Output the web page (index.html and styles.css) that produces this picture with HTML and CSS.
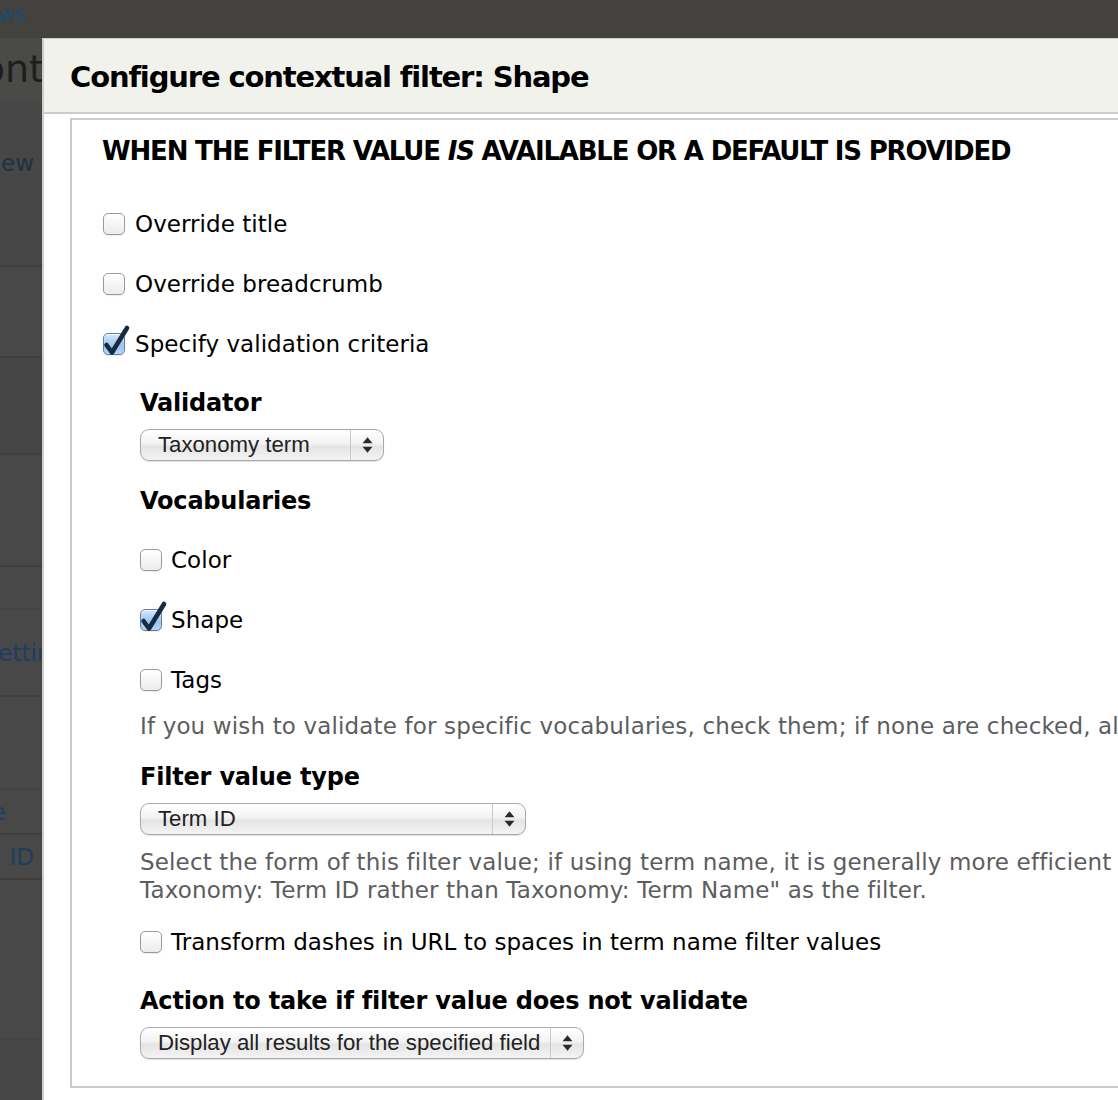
FILE: index.html
```html
<!DOCTYPE html>
<html>
<head>
<meta charset="utf-8">
<link rel="stylesheet" href="styles.css">
</head>
<body>
<div class="page">
  <div class="topbar"><span class="clip"><span class="toplink">Views</span></span></div>
  <div class="side">
    <div class="side-title"><span>Cont</span></div>
    <div class="side-row r1"><span class="dk">View</span></div>
    <div class="side-row r2"></div>
    <div class="side-row r3"></div>
    <div class="side-row r4"></div>
    <div class="side-row r5"></div>
    <div class="side-row r6"><span class="bl cut">Settings</span></div>
    <div class="side-row r7"></div>
    <div class="side-row r8"><span class="bl">e</span></div>
    <div class="side-row r9"><span class="bl">ID</span></div>
    <div class="side-row r10"></div>
    <div class="side-row r11"></div>
  </div>
</div>

<div class="dialog">
  <div class="dialog-head">
    <h1 class="dialog-title">Configure contextual filter: Shape</h1>
  </div>
  <div class="dialog-body">
    <div class="fieldset">
      <h2 class="legend">WHEN THE FILTER VALUE <em>IS</em> AVAILABLE OR A DEFAULT IS PROVIDED</h2>

      <div class="check-row top"><span class="cb"></span><span class="lbl">Override title</span></div>
      <div class="check-row"><span class="cb"></span><span class="lbl">Override breadcrumb</span></div>
      <div class="check-row"><span class="cb checked"><svg viewBox="0 0 22 22" class="tick"><path d="M2.5 11 L8 18.5 L23 -6"/></svg></span><span class="lbl">Specify validation criteria</span></div>

      <div class="nested">
        <div class="field-label validator">Validator</div>
        <div class="select w1"><span class="sel-text">Taxonomy term</span><span class="sel-arrows"><svg viewBox="0 0 10 16"><path d="M5 1 L9.5 6.5 L0.5 6.5 Z M5 15 L9.5 9.5 L0.5 9.5 Z"/></svg></span></div>

        <div class="field-label vocab">Vocabularies</div>
        <div class="check-row sub"><span class="cb"></span><span class="lbl">Color</span></div>
        <div class="check-row sub"><span class="cb checked"><svg viewBox="0 0 22 22" class="tick"><path d="M2.5 11 L8 18.5 L23 -6"/></svg></span><span class="lbl">Shape</span></div>
        <div class="check-row sub"><span class="cb"></span><span class="lbl">Tags</span></div>
        <div class="desc one">If you wish to validate for specific vocabularies, check them; if none are checked, all terms will pass.</div>

        <div class="field-label fvt">Filter value type</div>
        <div class="select w2"><span class="sel-text">Term ID</span><span class="sel-arrows"><svg viewBox="0 0 10 16"><path d="M5 1 L9.5 6.5 L0.5 6.5 Z M5 15 L9.5 9.5 L0.5 9.5 Z"/></svg></span></div>
        <div class="desc two">Select the form of this filter value; if using term name, it is generally more efficient to convert it to a term ID and use<br>Taxonomy: Term ID rather than Taxonomy: Term Name" as the filter.</div>

        <div class="check-row sub dash"><span class="cb"></span><span class="lbl">Transform dashes in URL to spaces in term name filter values</span></div>

        <div class="field-label action">Action to take if filter value does not validate</div>
        <div class="select w3"><span class="sel-text">Display all results for the specified field</span><span class="sel-arrows"><svg viewBox="0 0 10 16"><path d="M5 1 L9.5 6.5 L0.5 6.5 Z M5 15 L9.5 9.5 L0.5 9.5 Z"/></svg></span></div>
      </div>
    </div>
  </div>
</div>
</body>
</html>
```

FILE: styles.css
```css
html, body {
  margin: 0;
  padding: 0;
  width: 1118px;
  height: 1100px;
  overflow: hidden;
  background: #474747;
  font-family: "DejaVu Sans", Verdana, sans-serif;
}

.page {
  display: flex;
  flex-direction: column;
  height: 1100px;
}

.topbar {
  height: 38px;
  background: #43423f;
  display: flex;
}

.clip {
  width: 26px;
  height: 26px;
  overflow: hidden;
  display: flex;
  justify-content: flex-end;
  align-items: center;
}

.toplink {
  color: #1b4a73;
  font-size: 22px;
  white-space: nowrap;
}

.side {
  width: 42px;
  display: flex;
  flex-direction: column;
  overflow: hidden;
}

.side-title {
  height: 62px;
  background: #4a4a47;
  display: flex;
  justify-content: flex-end;
  align-items: center;
  font-size: 38px;
  color: #1e1e1e;
  white-space: nowrap;
  margin-right: -2px;
}

.side-row {
  display: flex;
  justify-content: flex-end;
  align-items: center;
  white-space: nowrap;
  font-size: 23px;
  border-bottom: 2px solid #3f3f3f;
  background: #484848;
  box-sizing: border-box;
}

.side-row .dk { color: #1f3144; margin-right: 8px; }
.side-row .bl { color: #1b3f60; }
.side-row .cut { margin-right: -36px; }

.r1 { height: 167px; background: #474747; align-items: flex-start; padding-top: 50px; }
.r2 { height: 91px; }
.r3 { height: 97px; background: #464646; }
.r4 { height: 112px; }
.r5 { height: 43px; border-bottom-color: #444; }
.r6 { height: 87px; }
.r7 { height: 93px; border-bottom-color: #434343; }
.r8 { height: 45px; }
.r8 .bl { margin-right: 36px; }
.r9 { height: 45px; }
.r9 .bl { margin-right: 8px; }
.r10 { height: 160px; border-bottom-color: #454545; }
.r11 { flex: 1; border-bottom: none; background: #4a4a4a; }

/* dialog */
.dialog {
  position: absolute;
  left: 42px;
  top: 38px;
  width: 1300px;
  height: 1100px;
  background: #fff;
  border-left: 2px solid #cdcdcb;
  border-top: 1px solid #cdcdcb;
}

.dialog-head {
  height: 73px;
  background: #f2f2ed;
  border-bottom: 2px solid #cccccc;
  display: flex;
  align-items: center;
  padding-left: 26px;
}

.dialog-title {
  margin: 0;
  font-size: 29px;
  font-weight: bold;
  color: #000;
  letter-spacing: -1.15px;
  margin-top: 2px;
}

.dialog-body {
  padding: 4px 0 0 26px;
}

.fieldset {
  border: 2px solid #cccccc;
  border-right: none;
  height: 970px;
  padding: 0 0 0 31px;
  box-sizing: border-box;
}

.legend {
  margin: 0;
  margin-left: -1px;
  padding-top: 16px;
  line-height: 30px;
  font-size: 26px;
  font-weight: bold;
  color: #000;
  letter-spacing: -1.18px;
  white-space: nowrap;
}

.legend em { font-style: italic; }

.check-row {
  height: 60px;
  display: flex;
  align-items: center;
  white-space: nowrap;
}

.check-row.top { margin-top: 28px; }

.cb {
  width: 20px;
  height: 20px;
  border: 1px solid #9a9a9a;
  border-radius: 5px;
  background: linear-gradient(#ffffff, #ececec);
  box-shadow: inset 0 1px 1px rgba(255,255,255,0.9), 0 1px 1px rgba(0,0,0,0.08);
  position: relative;
  flex: none;
  margin-right: 10px;
}

.cb.checked {
  border-color: #5e7fa3;
  background: linear-gradient(#d4e6fb, #9cc4ef 60%, #b6d6f6);
}

.tick {
  position: absolute;
  left: 0;
  top: 0;
  width: 22px;
  height: 22px;
  overflow: visible;
}

.tick path {
  fill: none;
  stroke: #162a44;
  stroke-width: 4.6;
  stroke-linecap: round;
  stroke-linejoin: round;
}

.lbl {
  font-size: 23px;
  color: #000;
  letter-spacing: 0.05px;
}

.nested {
  padding-left: 37px;
  display: flex;
  flex-direction: column;
  align-items: flex-start;
}

.check-row.sub .cb { margin-right: 9px; }

.field-label {
  font-size: 24px;
  font-weight: bold;
  color: #000;
  line-height: 30px;
  letter-spacing: -0.2px;
  white-space: nowrap;
}

.validator { margin-top: 14px; }
.vocab { margin-top: 25px; margin-bottom: 14px; }
.fvt { margin-top: 22px; }
.action { margin-top: 14px; }

.desc {
  font-size: 23px;
  color: #5c5d60;
  line-height: 28px;
  letter-spacing: 0.15px;
  white-space: nowrap;
}

.desc.one { margin-top: 2px; }
.desc.two { margin-top: 13px; }
.check-row.dash { margin-top: 8px; }

.select {
  margin-top: 11px;
  height: 30px;
  border: 1px solid #a9a9a9;
  border-radius: 9px;
  background: linear-gradient(#ffffff, #f3f3f3 45%, #e4e4e4 55%, #f4f4f4);
  box-shadow: inset 0 1px 0 #fff, 0 1px 1px rgba(0,0,0,0.12);
  display: flex;
  align-items: center;
  box-sizing: content-box;
}

.sel-text {
  flex: 1;
  font-family: "Liberation Sans", Arial, sans-serif;
  font-size: 22.2px;
  color: #222;
  padding-left: 17px;
  white-space: nowrap;
}

.sel-arrows {
  width: 32px;
  height: 100%;
  border-left: 1px solid #c9c9c9;
  display: flex;
  align-items: center;
  justify-content: center;
}

.sel-arrows svg {
  width: 11px;
  height: 18px;
  fill: #2a2a2a;
}

.w1 { width: 242px; }
.w2 { width: 384px; }
.w3 { width: 442px; }
```
